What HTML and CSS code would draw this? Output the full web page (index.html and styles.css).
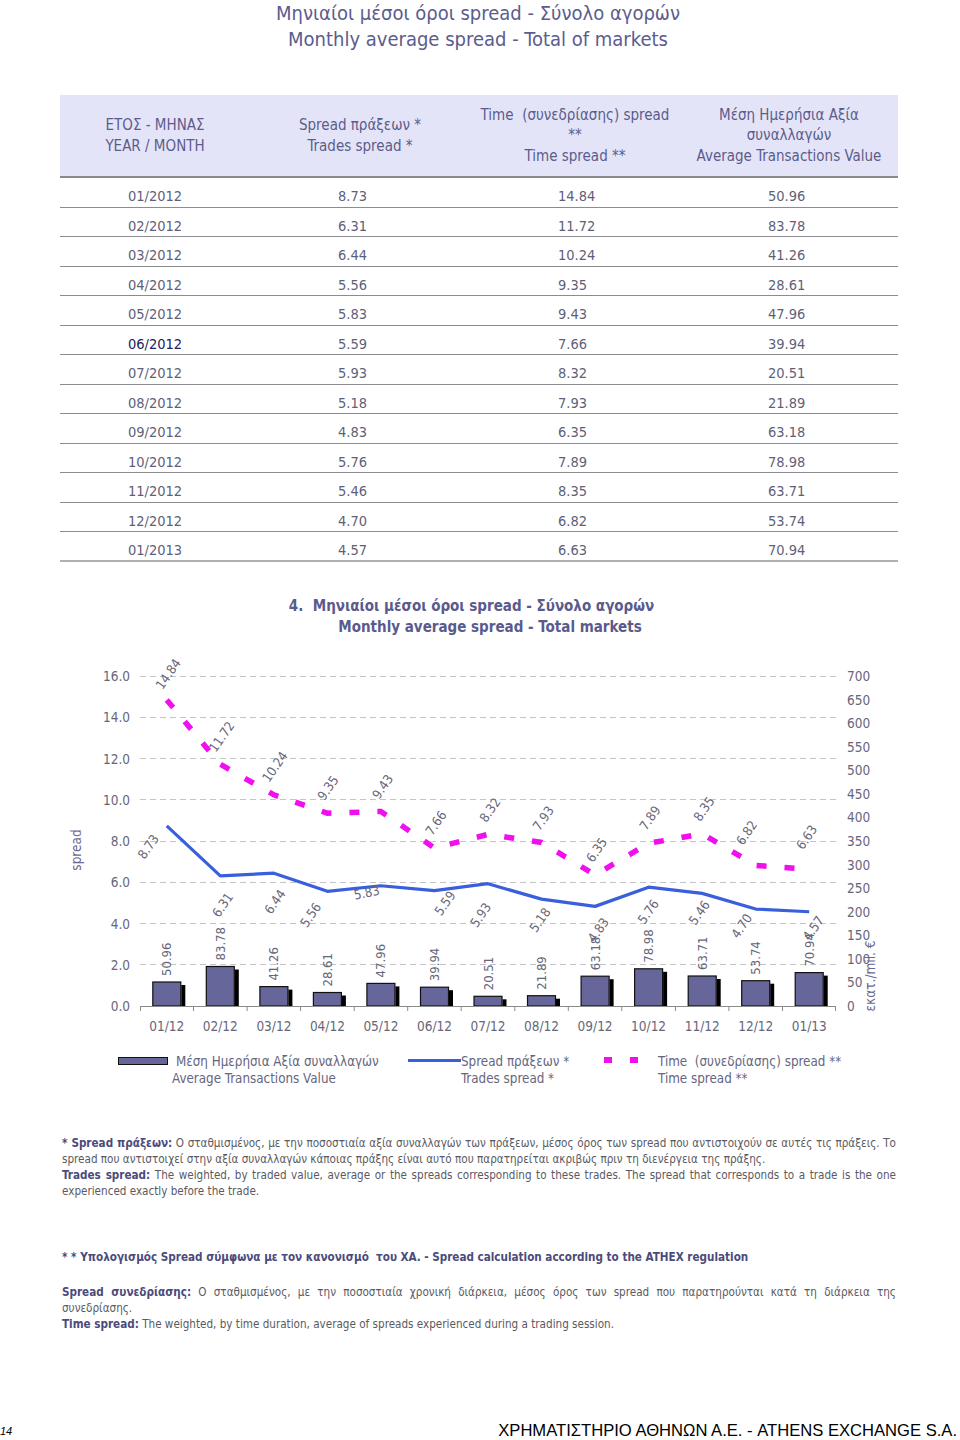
FILE: index.html
```html
<!DOCTYPE html>
<html lang="el">
<head>
<meta charset="utf-8">
<title>Monthly average spread</title>
<link rel="stylesheet" href="styles.css">
</head>
<body>
<div class="page">
  <header class="title">
    <div>Μηνιαίοι μέσοι όροι spread - Σύνολο αγορών</div>
    <div>Monthly average spread - Total of markets</div>
  </header>

  <section class="table">
    <div class="thead">
      <div class="th">ΕΤΟΣ - ΜΗΝΑΣ<br>YEAR / MONTH</div>
      <div class="th">Spread πράξεων *<br>Trades spread *</div>
      <div class="th">Time &nbsp;(συνεδρίασης) spread<br>**<br>Time spread **</div>
      <div class="th">Μέση Ημερήσια Αξία<br>συναλλαγών<br>Average Transactions Value</div>
    </div>
    <div class="tr"><div class="td c1">01/2012</div><div class="td">8.73</div><div class="td">14.84</div><div class="td">50.96</div></div>
    <div class="tr"><div class="td c1">02/2012</div><div class="td">6.31</div><div class="td">11.72</div><div class="td">83.78</div></div>
    <div class="tr"><div class="td c1">03/2012</div><div class="td">6.44</div><div class="td">10.24</div><div class="td">41.26</div></div>
    <div class="tr"><div class="td c1">04/2012</div><div class="td">5.56</div><div class="td">9.35</div><div class="td">28.61</div></div>
    <div class="tr"><div class="td c1">05/2012</div><div class="td">5.83</div><div class="td">9.43</div><div class="td">47.96</div></div>
    <div class="tr"><div class="td c1 dark">06/2012</div><div class="td">5.59</div><div class="td">7.66</div><div class="td">39.94</div></div>
    <div class="tr"><div class="td c1">07/2012</div><div class="td">5.93</div><div class="td">8.32</div><div class="td">20.51</div></div>
    <div class="tr"><div class="td c1">08/2012</div><div class="td">5.18</div><div class="td">7.93</div><div class="td">21.89</div></div>
    <div class="tr"><div class="td c1">09/2012</div><div class="td">4.83</div><div class="td">6.35</div><div class="td">63.18</div></div>
    <div class="tr"><div class="td c1">10/2012</div><div class="td">5.76</div><div class="td">7.89</div><div class="td">78.98</div></div>
    <div class="tr"><div class="td c1">11/2012</div><div class="td">5.46</div><div class="td">8.35</div><div class="td">63.71</div></div>
    <div class="tr"><div class="td c1">12/2012</div><div class="td">4.70</div><div class="td">6.82</div><div class="td">53.74</div></div>
    <div class="tr last"><div class="td c1">01/2013</div><div class="td">4.57</div><div class="td">6.63</div><div class="td">70.94</div></div>
  </section>

  <div class="chart-title">
    <div class="ct1">4.&nbsp; Μηνιαίοι μέσοι όροι spread - Σύνολο αγορών</div>
    <div class="ct2">Monthly average spread - Total markets</div>
  </div>

  <svg class="chart" width="960" height="400" viewBox="0 640 960 400" xmlns="http://www.w3.org/2000/svg">
    <g class="grid">
      <line x1="140" y1="676.5" x2="836" y2="676.5"/>
      <line x1="140" y1="717.5" x2="836" y2="717.5"/>
      <line x1="140" y1="758.5" x2="836" y2="758.5"/>
      <line x1="140" y1="799.5" x2="836" y2="799.5"/>
      <line x1="140" y1="841.5" x2="836" y2="841.5"/>
      <line x1="140" y1="882.5" x2="836" y2="882.5"/>
      <line x1="140" y1="923.5" x2="836" y2="923.5"/>
      <line x1="140" y1="964.5" x2="836" y2="964.5"/>
    </g>

    <g class="ylab">
      <text x="130" y="1006">0.0</text>
      <text x="130" y="965">2.0</text>
      <text x="130" y="923.5">4.0</text>
      <text x="130" y="882">6.0</text>
      <text x="130" y="841">8.0</text>
      <text x="130" y="800">10.0</text>
      <text x="130" y="758.5">12.0</text>
      <text x="130" y="717">14.0</text>
      <text x="130" y="676">16.0</text>
    </g>
    <g class="y2lab">
      <text x="847" y="1006">0</text>
      <text x="847" y="982.4">50</text>
      <text x="847" y="958.9">100</text>
      <text x="847" y="935.3">150</text>
      <text x="847" y="911.7">200</text>
      <text x="847" y="888.1">250</text>
      <text x="847" y="864.6">300</text>
      <text x="847" y="841">350</text>
      <text x="847" y="817.4">400</text>
      <text x="847" y="793.9">450</text>
      <text x="847" y="770.3">500</text>
      <text x="847" y="746.7">550</text>
      <text x="847" y="723.1">600</text>
      <text x="847" y="699.6">650</text>
      <text x="847" y="676">700</text>
    </g>
    <text class="axis-title" transform="translate(76 850) rotate(-90)">spread</text>
    <text class="axis-title" transform="translate(870 976) rotate(-90)">εκατ./mil. €</text>

    <g class="bars">
      <rect x="152.8" y="982" width="28" height="24"/>
      <rect x="206.3" y="966.5" width="28" height="39.5"/>
      <rect x="259.9" y="986.6" width="28" height="19.4"/>
      <rect x="313.4" y="992.5" width="28" height="13.5"/>
      <rect x="366.9" y="983.4" width="28" height="22.6"/>
      <rect x="420.5" y="987.2" width="28" height="18.8"/>
      <rect x="474" y="996.3" width="28" height="9.7"/>
      <rect x="527.5" y="995.7" width="28" height="10.3"/>
      <rect x="581.1" y="976.2" width="28" height="29.8"/>
      <rect x="634.6" y="968.8" width="28" height="37.2"/>
      <rect x="688.2" y="976" width="28" height="30"/>
      <rect x="741.7" y="980.7" width="28" height="25.3"/>
      <rect x="795.2" y="972.6" width="28" height="33.4"/>
    </g>
    <g class="shadows">
      <rect x="181.3" y="985" width="4" height="21"/>
      <rect x="234.8" y="969.5" width="4" height="36.5"/>
      <rect x="288.4" y="989.6" width="4" height="16.4"/>
      <rect x="341.9" y="995.5" width="4" height="10.5"/>
      <rect x="395.4" y="986.4" width="4" height="19.6"/>
      <rect x="449" y="990.2" width="4" height="15.8"/>
      <rect x="502.5" y="999.3" width="4" height="6.7"/>
      <rect x="556" y="998.7" width="4" height="7.3"/>
      <rect x="609.6" y="979.2" width="4" height="26.8"/>
      <rect x="663.1" y="971.8" width="4" height="34.2"/>
      <rect x="716.7" y="979" width="4" height="27"/>
      <rect x="770.2" y="983.7" width="4" height="22.3"/>
      <rect x="823.7" y="975.6" width="4" height="30.4"/>
    </g>

    <g class="axis">
      <line x1="140" y1="1006.5" x2="836" y2="1006.5"/>
      <line x1="140.5" y1="1006" x2="140.5" y2="1011"/>
      <line x1="193.5" y1="1006" x2="193.5" y2="1011"/>
      <line x1="247.1" y1="1006" x2="247.1" y2="1011"/>
      <line x1="300.6" y1="1006" x2="300.6" y2="1011"/>
      <line x1="354.2" y1="1006" x2="354.2" y2="1011"/>
      <line x1="407.7" y1="1006" x2="407.7" y2="1011"/>
      <line x1="461.2" y1="1006" x2="461.2" y2="1011"/>
      <line x1="514.8" y1="1006" x2="514.8" y2="1011"/>
      <line x1="568.3" y1="1006" x2="568.3" y2="1011"/>
      <line x1="621.8" y1="1006" x2="621.8" y2="1011"/>
      <line x1="675.4" y1="1006" x2="675.4" y2="1011"/>
      <line x1="728.9" y1="1006" x2="728.9" y2="1011"/>
      <line x1="782.5" y1="1006" x2="782.5" y2="1011"/>
      <line x1="835.5" y1="1006" x2="835.5" y2="1011"/>
    </g>
    <g class="xlab">
      <text x="166.8" y="1026">01/12</text>
      <text x="220.3" y="1026">02/12</text>
      <text x="273.9" y="1026">03/12</text>
      <text x="327.4" y="1026">04/12</text>
      <text x="380.9" y="1026">05/12</text>
      <text x="434.5" y="1026">06/12</text>
      <text x="488" y="1026">07/12</text>
      <text x="541.5" y="1026">08/12</text>
      <text x="595.1" y="1026">09/12</text>
      <text x="648.6" y="1026">10/12</text>
      <text x="702.2" y="1026">11/12</text>
      <text x="755.7" y="1026">12/12</text>
      <text x="809.2" y="1026">01/13</text>
    </g>

    <polyline class="time-line" points="166.77,699.92 220.31,764.27 273.85,794.8 327.38,813.16 380.92,811.51 434.46,848.01 488,834.4 541.54,842.44 595.08,875.03 648.62,843.27 702.15,833.78 755.69,865.34 809.23,869.26"/>
    <polyline class="trades-line" points="166.77,825.94 220.31,875.86 273.85,873.17 327.38,891.32 380.92,885.76 434.46,890.71 488,883.69 541.54,899.16 595.08,906.38 648.62,887.2 702.15,893.39 755.69,909.06 809.23,911.74"/>

    <g class="dlab">
      <text transform="translate(168.3 674) rotate(-55)">14.84</text>
      <text transform="translate(221.7 736.7) rotate(-55)">11.72</text>
      <text transform="translate(275 766.7) rotate(-55)">10.24</text>
      <text transform="translate(328 788) rotate(-55)">9.35</text>
      <text transform="translate(382.7 786.7) rotate(-55)">9.43</text>
      <text transform="translate(436 823) rotate(-55)">7.66</text>
      <text transform="translate(490 810) rotate(-55)">8.32</text>
      <text transform="translate(543.3 818.3) rotate(-55)">7.93</text>
      <text transform="translate(596.7 850) rotate(-55)">6.35</text>
      <text transform="translate(650 818) rotate(-55)">7.89</text>
      <text transform="translate(704 809) rotate(-55)">8.35</text>
      <text transform="translate(746.7 832.7) rotate(-55)">6.82</text>
      <text transform="translate(806.7 837.3) rotate(-55)">6.63</text>

      <text transform="translate(148.3 846.7) rotate(-55)">8.73</text>
      <text transform="translate(222.7 905) rotate(-55)">6.31</text>
      <text transform="translate(275 901.7) rotate(-55)">6.44</text>
      <text transform="translate(310.7 915) rotate(-55)">5.56</text>
      <text transform="translate(366.7 892.7) rotate(-12)">5.83</text>
      <text transform="translate(445 903.3) rotate(-55)">5.59</text>
      <text transform="translate(480.7 915) rotate(-55)">5.93</text>
      <text transform="translate(540 920) rotate(-55)">5.18</text>
      <text transform="translate(598.3 930) rotate(-55)">4.83</text>
      <text transform="translate(648.3 911.7) rotate(-55)">5.76</text>
      <text transform="translate(699.3 912.7) rotate(-55)">5.46</text>
      <text transform="translate(741.7 926) rotate(-55)">4.70</text>
      <text transform="translate(813.3 928.3) rotate(-55)">4.57</text>
    </g>
    <g class="blab">
      <text transform="translate(166.8 976) rotate(-90)">50.96</text>
      <text transform="translate(220.3 960.5) rotate(-90)">83.78</text>
      <text transform="translate(273.9 980.6) rotate(-90)">41.26</text>
      <text transform="translate(327.4 986.5) rotate(-90)">28.61</text>
      <text transform="translate(380.9 977.4) rotate(-90)">47.96</text>
      <text transform="translate(434.5 981.2) rotate(-90)">39.94</text>
      <text transform="translate(488 990.3) rotate(-90)">20.51</text>
      <text transform="translate(541.5 989.7) rotate(-90)">21.89</text>
      <text transform="translate(595.1 970.2) rotate(-90)">63.18</text>
      <text transform="translate(648.6 962.8) rotate(-90)">78.98</text>
      <text transform="translate(702.2 970) rotate(-90)">63.71</text>
      <text transform="translate(755.7 974.7) rotate(-90)">53.74</text>
      <text transform="translate(809.2 966.6) rotate(-90)">70.94</text>
    </g>
  </svg>

  <div class="legend">
    <div class="lg lg1">
      <span class="sw-bar"></span>
      <div class="lg-text"><span class="l1">Μέση Ημερήσια Αξία συναλλαγών</span><span>Average Transactions Value</span></div>
    </div>
    <div class="lg lg2">
      <span class="sw-line"></span>
      <div class="lg-text"><span>Spread πράξεων *</span><span>Trades spread *</span></div>
    </div>
    <div class="lg lg3">
      <span class="sw-dash"><i></i><i></i></span>
      <div class="lg-text"><span>Time &nbsp;(συνεδρίασης) spread **</span><span>Time spread **</span></div>
    </div>
  </div>

  <div class="notes">
    <p class="note n1"><b>* Spread πράξεων:</b> Ο σταθμισμένος, με την ποσοστιαία αξία συναλλαγών των πράξεων, μέσος όρος των spread που αντιστοιχούν σε αυτές τις πράξεις. Το spread που αντιστοιχεί στην αξία συναλλαγών κάποιας πράξης είναι αυτό που παρατηρείται ακριβώς πριν τη διενέργεια της πράξης.<br><b>Trades spread:</b> The weighted, by traded value, average or the spreads corresponding to these trades. The spread that corresponds to a trade is the one experienced exactly before the trade.</p>
    <p class="note n2"><b>* * Υπολογισμός Spread σύμφωνα με τον κανονισμό &nbsp;του ΧΑ. - Spread calculation according to the ATHEX regulation</b></p>
    <p class="note n3"><b>Spread συνεδρίασης:</b> Ο σταθμισμένος, με την ποσοστιαία χρονική διάρκεια, μέσος όρος των spread που παρατηρούνται κατά τη διάρκεια της συνεδρίασης.<br><b>Time spread:</b> The weighted, by time duration, average of spreads experienced during a trading session.</p>
  </div>

  <footer class="footer">
    <span class="pnum">14</span>
    <span class="org">ΧΡΗΜΑΤΙΣΤΗΡΙΟ ΑΘΗΝΩΝ Α.Ε. - ATHENS EXCHANGE S.A.</span>
  </footer>
</div>
</body>
</html>
```

FILE: styles.css
```css
* { box-sizing: border-box; }
html, body { margin: 0; padding: 0; background: #fff; }
body {
  font-family: "DejaVu Sans Condensed", "DejaVu Sans", sans-serif;
  font-stretch: condensed;
  color: #5b5b70;
}
.page {
  width: 960px;
  height: 1440px;
  display: flex;
  flex-direction: column;
  overflow: hidden;
}

.title {
  text-align: center;
  font-size: 20px;
  line-height: 26px;
  color: #5c5c8e;
  padding-right: 4px;
}

.table {
  margin: 43px 62px 0 60px;
}
.thead {
  display: grid;
  grid-template-columns: 190px 220px 210px 1fr;
  align-items: center;
  background: #e4e4f8;
  height: 83px;
  border-bottom: 2px solid #8a8a8e;
}
.th {
  text-align: center;
  font-size: 15px;
  line-height: 20.5px;
  color: #5c5c8c;
}
.tr {
  display: grid;
  grid-template-columns: 190px 220px 210px 1fr;
  height: 29.5px;
  border-bottom: 1px solid #8c8c90;
  font-size: 14.5px;
  line-height: 16px;
  padding-top: 10px;
  color: #5f5f78;
}
.tr.last { border-bottom: 2px solid #b0b0b4; }
.td { padding-left: 88px; }
.td.c1 { padding-left: 0; text-align: center; }
.td.dark { color: #22225a; }

.chart-title {
  margin-top: 34px;
  font-weight: bold;
  font-size: 15px;
  line-height: 21px;
  color: #5a5a8c;
  text-align: center;
}
.ct1 { padding-right: 17px; }
.ct2 { padding-left: 20px; }

.chart {
  display: block;
  margin-top: 2.5px;
  font-family: "DejaVu Sans Condensed", "DejaVu Sans", sans-serif;
  font-stretch: condensed;
}
.grid line { stroke: #c4c4c8; stroke-width: 1; stroke-dasharray: 6 4; }
.ylab text { font-size: 13.5px; fill: #66667a; text-anchor: end; dominant-baseline: central; }
.y2lab text { font-size: 13.5px; fill: #66667a; text-anchor: start; dominant-baseline: central; }
.axis-title { font-size: 13.5px; fill: #6a6a90; text-anchor: middle; dominant-baseline: central; }
.bars rect { fill: #66669a; stroke: #111; stroke-width: 1.2; }
.shadows rect { fill: #000; }
.axis line { stroke: #8a8a8a; stroke-width: 1; }
.xlab text { font-size: 13.5px; fill: #66667a; text-anchor: middle; dominant-baseline: central; }
.trades-line { fill: none; stroke: #3a5fdc; stroke-width: 3.2; stroke-linejoin: round; }
.time-line { fill: none; stroke: #f010ee; stroke-width: 5.5; stroke-dasharray: 10 18; }
.dlab text { font-size: 13px; fill: #66667a; text-anchor: middle; dominant-baseline: central; }
.blab text { font-size: 13px; fill: #66667a; text-anchor: start; dominant-baseline: central; }

.legend {
  display: flex;
  margin-top: 13px;
  font-size: 13.3px;
  line-height: 17px;
  color: #66667e;
  height: 35px;
}
.lg { display: flex; align-items: flex-start; }
.lg-text { display: flex; flex-direction: column; }
.lg1 { margin-left: 118px; width: 290px; }
.sw-bar {
  flex: none;
  width: 50px; height: 8px; margin-top: 4px;
  background: #66669a; border: 1.5px solid #111;
}
.lg1 .lg-text { margin-left: 4px; }
.lg1 .l1 { padding-left: 4px; }
.lg2 { width: 196px; }
.sw-line { flex: none; width: 53px; height: 3px; background: #3a5fdc; margin-top: 6px; }
.sw-dash { flex: none; display: flex; gap: 18px; width: 54px; margin-top: 4px; }
.sw-dash i { display: block; width: 8px; height: 6px; background: #f010ee; }

.notes { padding: 0 64px 0 62px; }
.note {
  margin: 0;
  font-size: 11.6px;
  line-height: 16px;
  text-align: justify;
  color: #5a5a62;
}
.note b { color: #4b4b7c; }
.n1 { margin-top: 47px; }
.n2 { margin-top: 50px; }
.n3 { margin-top: 19px; }

.footer {
  margin-top: auto;
  height: 18px;
  display: flex;
  justify-content: space-between;
  align-items: center;
  padding-right: 3px;
  font-family: "Liberation Sans", Arial, sans-serif;
  font-stretch: normal;
  color: #000;
}
.pnum { font-size: 11px; font-style: italic; }
.org { font-size: 16.6px; }
```
